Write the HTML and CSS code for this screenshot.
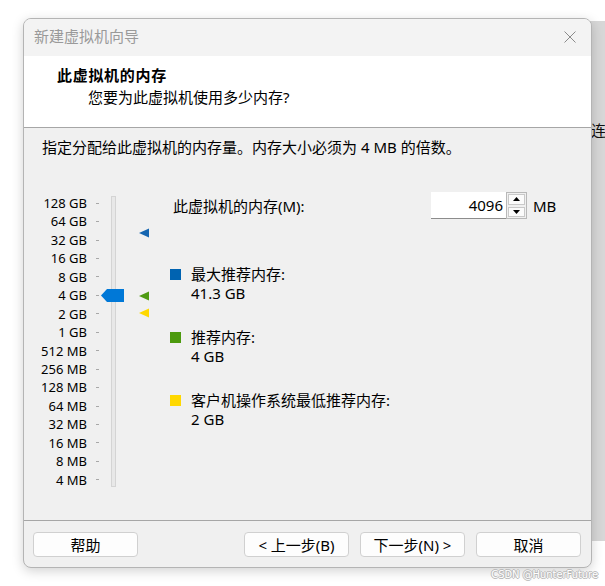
FILE: index.html
```html
<!DOCTYPE html>
<html lang="zh-CN">
<head>
<meta charset="utf-8">
<title>新建虚拟机向导</title>
<link rel="stylesheet" href="styles.css">
</head>
<body>
<div class="desktop">
  <div class="bgwin"><span class="bgwin-text">连</span></div>
  <div class="window">
    <div class="titlebar">
      <span class="title">新建虚拟机向导</span>
      <svg class="close" width="12" height="12" viewBox="0 0 12 12"><path d="M0.5 0.5 L11.5 11.5 M11.5 0.5 L0.5 11.5" stroke="#8a8a8a" stroke-width="1" fill="none"/></svg>
    </div>
    <div class="header">
      <div class="h-title">此虚拟机的内存</div>
      <div class="h-sub">您要为此虚拟机使用多少内存?</div>
    </div>
    <div class="body">
      <p class="intro">指定分配给此虚拟机的内存量。内存大小必须为 4 MB 的倍数。</p>
      <div class="main">
        <div class="slider">
          <div class="labels">
            <div>128 GB</div><div>64 GB</div><div>32 GB</div><div>16 GB</div>
            <div>8 GB</div><div>4 GB</div><div>2 GB</div><div>1 GB</div>
            <div>512 MB</div><div>256 MB</div><div>128 MB</div><div>64 MB</div>
            <div>32 MB</div><div>16 MB</div><div>8 MB</div><div>4 MB</div>
          </div>
          <div class="ticks">
            <i></i><i></i><i></i><i></i><i></i><i></i><i></i><i></i>
            <i></i><i></i><i></i><i></i><i></i><i></i><i></i><i></i>
          </div>
          <div class="track"></div>
          <svg class="thumb" width="23" height="13" viewBox="0 0 23 13"><polygon points="0,6.5 6,0 23,0 23,13 6,13" fill="#0078d7"/></svg>
          <svg class="mark mark-max" width="10" height="10" viewBox="0 0 10 10"><polygon points="0,5 10,0.5 10,9.5" fill="#1565b0"/></svg>
          <svg class="mark mark-rec" width="10" height="10" viewBox="0 0 10 10"><polygon points="0,5 10,0.5 10,9.5" fill="#4e9a12"/></svg>
          <svg class="mark mark-min" width="10" height="10" viewBox="0 0 10 10"><polygon points="0,5 10,0.5 10,9.5" fill="#ffd800"/></svg>
        </div>
        <div class="info">
          <div class="mem-row">
            <span class="mem-label">此虚拟机的内存(M):</span>
            <div class="mem-input">4096</div>
            <div class="spin">
              <div class="spin-btn"><svg width="7" height="4" viewBox="0 0 7 4"><polygon points="3.5,0 7,4 0,4" fill="#000"/></svg></div>
              <div class="spin-btn"><svg width="7" height="4" viewBox="0 0 7 4"><polygon points="0,0 7,0 3.5,4" fill="#000"/></svg></div>
            </div>
            <span class="mem-unit">MB</span>
          </div>
          <div class="legend">
            <div class="legend-item">
              <span class="sq sq-max"></span>
              <div class="legend-text"><div>最大推荐内存:</div><div>41.3 GB</div></div>
            </div>
            <div class="legend-item">
              <span class="sq sq-rec"></span>
              <div class="legend-text"><div>推荐内存:</div><div>4 GB</div></div>
            </div>
            <div class="legend-item">
              <span class="sq sq-min"></span>
              <div class="legend-text"><div>客户机操作系统最低推荐内存:</div><div>2 GB</div></div>
            </div>
          </div>
        </div>
      </div>
    </div>
    <div class="footer">
      <button class="btn btn-help">帮助</button>
      <button class="btn">&lt; 上一步(B)</button>
      <button class="btn">下一步(N) &gt;</button>
      <button class="btn">取消</button>
    </div>
  </div>
  <div class="watermark">CSDN @HunterFuture</div>
</div>
</body>
</html>
```
FILE: styles.css
```css
html, body {
  margin: 0;
  padding: 0;
  background: #ffffff;
}

.desktop {
  position: relative;
  width: 605px;
  height: 586px;
  overflow: hidden;
  box-sizing: border-box;
  padding: 18px 0 0 23px;
  background: #ffffff;
  font-family: "Noto Sans", "Noto Sans CJK SC", sans-serif;
  font-size: 15px;
  color: #000;
}

.bgwin {
  position: absolute;
  left: 590px;
  top: 21px;
  width: 15px;
  height: 520px;
  overflow: hidden;
  background: #d7d7d7;
}

.bgwin-text {
  position: absolute;
  left: 1px;
  top: 99px;
  font-size: 15px;
  line-height: 20px;
  color: #111;
  white-space: nowrap;
}

.window {
  position: relative;
  z-index: 1;
  width: 569px;
  height: 550px;
  box-sizing: border-box;
  border: 1px solid #b4b4b4;
  border-radius: 8px;
  overflow: hidden;
  display: flex;
  flex-direction: column;
  background: #f0f0f0;
  box-shadow: 0 3px 12px rgba(0, 0, 0, 0.18);
}

.titlebar {
  height: 37px;
  flex: none;
  display: flex;
  align-items: center;
  justify-content: space-between;
  padding: 0 15px 3px 10px;
  box-sizing: border-box;
  background: #f3f3f3;
}

.title {
  color: #9a9a9a;
  line-height: 20px;
}

.close {
  display: block;
  margin-top: 2px;
}

.header {
  height: 72px;
  flex: none;
  box-sizing: border-box;
  background: #ffffff;
  border-bottom: 1px solid #a6a6a6;
  padding: 8px 0 0 33px;
}

.h-title {
  font-weight: bold;
  line-height: 22px;
  letter-spacing: 0.7px;
}

.h-sub {
  line-height: 22px;
  padding-left: 31px;
}

.body {
  flex: 1;
  min-height: 0;
}

.intro {
  margin: 0;
  padding: 9px 0 0 18px;
  line-height: 20px;
}

.main {
  display: flex;
  margin-top: 35px;
}

.slider {
  position: relative;
  width: 146px;
  flex: none;
  display: flex;
  padding-top: 2px;
}

.labels {
  width: 63px;
  font-size: 13px;
  text-align: right;
}

.labels div {
  height: 18.45px;
  line-height: 18.45px;
}

.ticks {
  width: 3px;
  margin-left: 9px;
}

.ticks i {
  display: flex;
  align-items: center;
  height: 18.45px;
}

.ticks i::after {
  content: "";
  display: block;
  width: 3px;
  height: 1px;
  background: #a8a8a8;
}

.track {
  width: 3px;
  margin: 2px 0 2px 12px;
  background: #e8e8e8;
  border: 1px solid #d4d4d4;
}

.thumb {
  position: absolute;
  left: 77px;
  top: 97px;
}

.mark {
  position: absolute;
  left: 115px;
}

.mark-max { top: 35.5px; }
.mark-rec { top: 98.7px; }
.mark-min { top: 116.3px; }

.info {
  flex: 1;
}

.mem-row {
  display: flex;
  align-items: center;
  height: 27px;
}

.mem-label {
  width: 258px;
  padding-left: 3px;
  line-height: 20px;
}

.mem-input {
  width: 75px;
  height: 27px;
  box-sizing: border-box;
  background: #ffffff;
  border-bottom: 1px solid #8c8c8c;
  text-align: right;
  padding-right: 3px;
  line-height: 26px;
}

.spin {
  width: 21px;
  height: 27px;
  box-sizing: border-box;
  border: 1px solid #b8b8b8;
  display: flex;
  flex-direction: column;
  background: #f0f0f0;
}

.spin-btn {
  flex: 1;
  display: flex;
  align-items: center;
  justify-content: center;
  margin: 1px;
  border: 1px solid #c9c9c9;
  background: #fbfbfb;
}

.spin-btn svg {
  display: block;
}

.mem-unit {
  margin-left: 6px;
  line-height: 20px;
}

.legend {
  margin-top: 46px;
  display: flex;
  flex-direction: column;
  gap: 25px;
}

.legend-item {
  display: flex;
  align-items: flex-start;
}

.sq {
  width: 11px;
  height: 11px;
  flex: none;
  margin-top: 4px;
  margin-right: 10px;
}

.sq-max { background: #0063b1; }
.sq-rec { background: #4c9a0e; }
.sq-min { background: #ffd800; }

.legend-text div {
  line-height: 19px;
}

.footer {
  height: 47px;
  flex: none;
  box-sizing: border-box;
  border-top: 1px solid #a6a6a6;
  display: flex;
  align-items: flex-start;
  gap: 11px;
  padding: 11px 10px 0 9px;
}

.btn {
  width: 105px;
  height: 25px;
  box-sizing: border-box;
  border: 1px solid #d0d0d0;
  border-radius: 4px;
  background: #fdfdfd;
  font-family: "Noto Sans", "Noto Sans CJK SC", sans-serif;
  font-size: 15px;
  line-height: 20px;
  color: #000;
  padding: 0;
}

.btn-help {
  margin-right: auto;
}

.watermark {
  position: absolute;
  right: 7px;
  top: 567px;
  font-family: "DejaVu Sans Condensed", "DejaVu Sans", sans-serif;
  font-size: 11px;
  line-height: 16px;
  color: #ffffff;
  text-shadow: 1px 0 0 #b8b8b8, -1px 0 0 #b8b8b8, 0 1px 0 #b8b8b8, 0 -1px 0 #b8b8b8;
  z-index: 2;
}
```
